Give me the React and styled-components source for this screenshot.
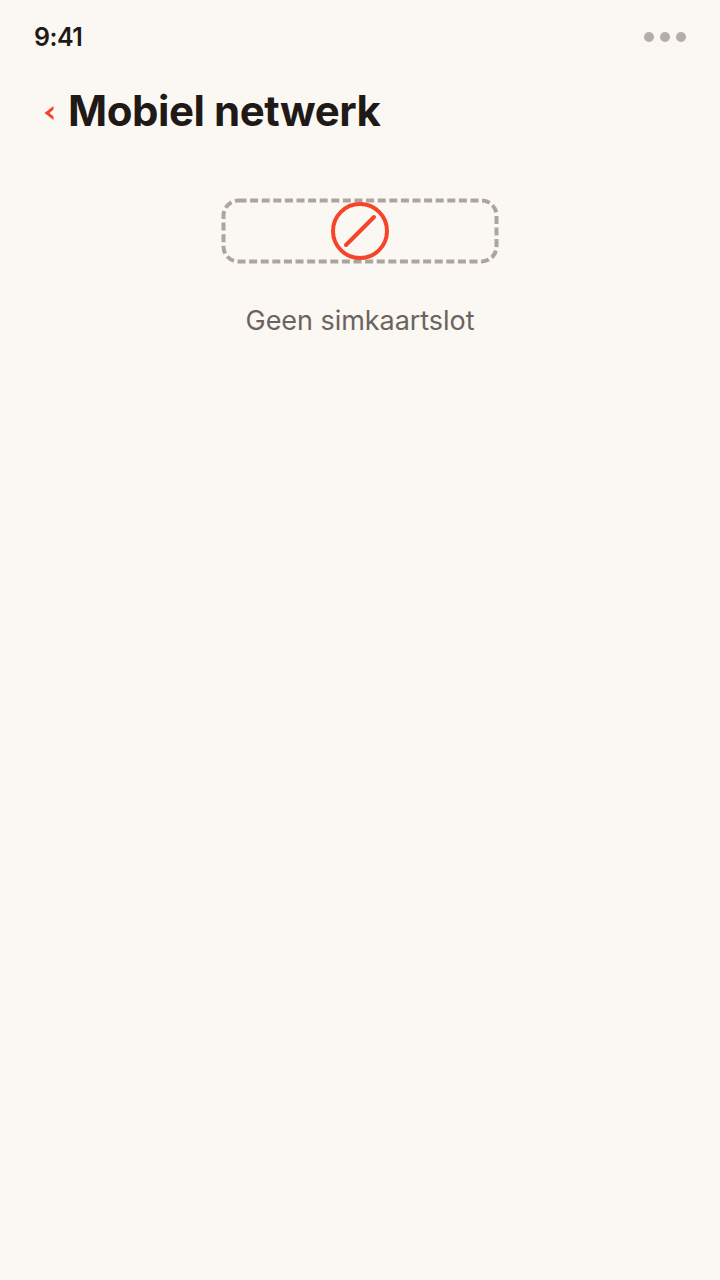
import styled, { createGlobalStyle } from "styled-components";

const GlobalStyle = createGlobalStyle`
  html, body {
    margin: 0;
    padding: 0;
    background: #fbf8f3;
  }
`;

const App = () => {
  return (
    <Screen>
      <GlobalStyle />
      <StatusBar>
        <Time>9:41</Time>
        <Dots>
          <Dot />
          <Dot />
          <Dot />
        </Dots>
      </StatusBar>
      <Header>
        <BackIcon viewBox="0 0 10 16" aria-hidden="true">
          <path d="M9.5 1 L0.5 8 L9.5 15 L9.5 11.5 L5.5 8 L9.5 4.5 Z" fill="#f4442a" />
        </BackIcon>
        <Title>Mobiel netwerk</Title>
      </Header>
      <Content>
        <SlotDrawing viewBox="0 0 280 68" aria-hidden="true">
          <rect
            x="3.5"
            y="3.5"
            width="273"
            height="61"
            rx="15"
            fill="none"
            stroke="#aba59d"
            strokeWidth="4"
            strokeDasharray="8 3.6"
          />
          <circle cx="140" cy="34" r="27" fill="#fbf8f3" stroke="#f4442a" strokeWidth="4" />
          <line x1="126" y1="48" x2="154" y2="20" stroke="#f4442a" strokeWidth="4" strokeLinecap="round" />
        </SlotDrawing>
        <Message>Geen simkaartslot</Message>
      </Content>
    </Screen>
  );
};

const Screen = styled.div`
  width: 720px;
  height: 1280px;
  overflow: hidden;
  background: #fbf8f3;
  font-family: "Inter", "Liberation Sans", sans-serif;
`;

const StatusBar = styled.div`
  height: 74px;
  padding: 0 34px;
  display: flex;
  align-items: center;
  justify-content: space-between;
`;

const Time = styled.span`
  font-size: 25px;
  font-weight: 600;
  letter-spacing: -0.5px;
  color: #1f1a17;
`;

const Dots = styled.div`
  display: flex;
  gap: 6px;
`;

const Dot = styled.span`
  width: 10px;
  height: 10px;
  border-radius: 50%;
  background: #b3aea7;
`;

const Header = styled.div`
  height: 72px;
  padding-left: 44px;
  display: flex;
  align-items: center;
  gap: 14px;
`;

const BackIcon = styled.svg`
  width: 10px;
  height: 16px;
  margin-top: 5px;
`;

const Title = styled.h1`
  margin: 0;
  font-size: 42px;
  font-weight: 700;
  letter-spacing: -0.45px;
  color: #1f1a17;
`;

const Content = styled.div`
  padding-top: 51px;
  display: flex;
  flex-direction: column;
  align-items: center;
`;

const SlotDrawing = styled.svg`
  width: 280px;
  height: 68px;
`;

const Message = styled.p`
  margin: 39px 0 0;
  font-size: 27px;
  letter-spacing: -0.05px;
  color: #6b645e;
`;

export default App;
